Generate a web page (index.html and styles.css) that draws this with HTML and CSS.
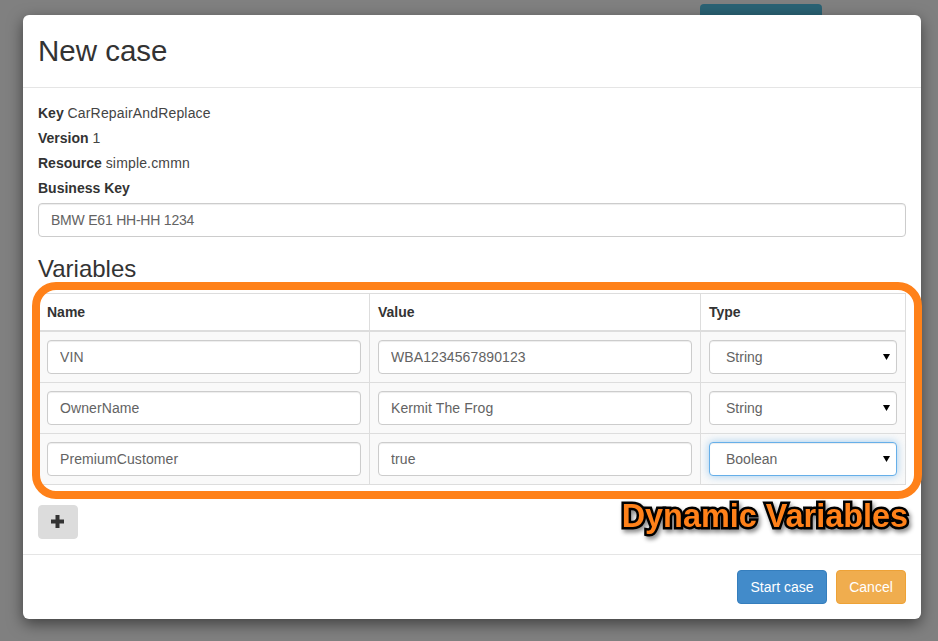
FILE: index.html
```html
<!DOCTYPE html>
<html lang="en">
<head>
<meta charset="utf-8">
<title>New case</title>
<link rel="stylesheet" href="styles.css">
</head>
<body>
<div class="behind">
  <span class="behind-title">ACM Dashboard</span>
  <span class="behind-btn"></span>
</div>
<div class="modal">
  <header class="modal-header"><h4>New case</h4></header>
  <div class="modal-body">
    <p class="info"><b>Key</b> <span class="wide">CarRepairAndReplace</span></p>
    <p class="info"><b>Version</b> <span class="wide">1</span></p>
    <p class="info"><b>Resource</b> <span class="wide">simple.cmmn</span></p>
    <label class="info"><b>Business Key</b></label>
    <input class="field tight" value="BMW E61 HH-HH 1234">
    <h3>Variables</h3>
    <table class="vars">
      <colgroup><col class="c1"><col class="c2"><col class="c3"></colgroup>
      <thead><tr><th>Name</th><th>Value</th><th>Type</th></tr></thead>
      <tbody>
        <tr>
          <td><input class="field" value="VIN"></td>
          <td><input class="field" value="WBA1234567890123"></td>
          <td><div class="select"><span>String</span><svg width="7" height="6" viewBox="0 0 7 6"><path d="M0 0h7L3.5 6z"/></svg></div></td>
        </tr>
        <tr>
          <td><input class="field" value="OwnerName"></td>
          <td><input class="field" value="Kermit The Frog"></td>
          <td><div class="select"><span>String</span><svg width="7" height="6" viewBox="0 0 7 6"><path d="M0 0h7L3.5 6z"/></svg></div></td>
        </tr>
        <tr>
          <td><input class="field" value="PremiumCustomer"></td>
          <td><input class="field" value="true"></td>
          <td><div class="select focus"><span>Boolean</span><svg width="7" height="6" viewBox="0 0 7 6"><path d="M0 0h7L3.5 6z"/></svg></div></td>
        </tr>
      </tbody>
    </table>
    <button class="add" type="button" aria-label="Add"><svg width="13" height="13" viewBox="0 0 13 13"><path d="M4.5 0h4v4.5H13v4H8.5V13h-4V8.5H0v-4h4.5z"/></svg></button>
  </div>
  <footer class="modal-footer">
    <button class="btn start" type="button">Start case</button>
    <button class="btn cancel" type="button">Cancel</button>
  </footer>
  <div class="frame"></div>
  <div class="callout">Dynamic Variables</div>
</div>
</body>
</html>
```
FILE: styles.css
```css
* { box-sizing: border-box; }
html, body { margin: 0; height: 100%; }
body {
  background: #808080;
  font-family: "Liberation Sans", Arial, sans-serif;
  font-size: 14px;
  line-height: 20px;
  color: #333;
  overflow: hidden;
}
.behind {
  display: flex;
  justify-content: space-between;
  padding: 4px 116px 0 127px;
}
.behind-title { font-size: 18px; margin-top: 8px; color: #1a1a1a; font-weight: 700; }
.behind-btn {
  width: 122px;
  height: 34px;
  background: #2a6274;
  border-radius: 4px;
}
.modal {
  position: absolute;
  left: 23px;
  top: 15px;
  width: 898px;
  height: 604px;
  background: #fff;
  border-radius: 6px;
  box-shadow: 0 5px 15px rgba(0, 0, 0, .5);
}
.modal-header {
  padding: 15px;
  border-bottom: 1px solid #e5e5e5;
}
.modal-header h4 {
  margin: 0;
  font-size: 29.5px;
  font-weight: 400;
  line-height: 42px;
}
.modal-body { padding: 15px; }
.info { display: block; margin: 0 0 5px; }
.wide { letter-spacing: .16px; color: #444; }
.field {
  display: block;
  width: 100%;
  height: 34px;
  padding: 6px 12px;
  font: inherit;
  letter-spacing: .1px;
  color: #636363;
  background: #fff;
  border: 1px solid #ccc;
  border-radius: 4px;
  box-shadow: inset 0 1px 1px rgba(0, 0, 0, .075);
  outline: none;
}
.field.tight { letter-spacing: -.22px; }
.modal-body h3 {
  margin: 19px 0 11px;
  font-size: 24px;
  font-weight: 400;
  line-height: 26px;
}
.vars {
  width: 867px;
  table-layout: fixed;
  border-collapse: collapse;
  margin-bottom: 20px;
}
.c1, .c2 { width: 331px; }
.c3 { width: 205px; }
.vars th, .vars td {
  border: 1px solid #ddd;
  padding: 8px;
  text-align: left;
  vertical-align: top;
}
.vars th { border-bottom-width: 2px; }
.vars tbody td { background: #f9f9f9; }
.select {
  position: relative;
  display: flex;
  align-items: center;
  height: 34px;
  padding-left: 16px;
  color: #636363;
  background: #fff;
  border: 1px solid #ccc;
  border-radius: 4px;
  box-shadow: inset 0 1px 1px rgba(0, 0, 0, .075);
}
.select svg { position: absolute; right: 6px; top: 13px; fill: #000; }
.select.focus {
  border-color: #66afe9;
  box-shadow: inset 0 1px 1px rgba(0, 0, 0, .075), 0 0 8px rgba(102, 175, 233, .6);
}
.add {
  display: flex;
  align-items: center;
  justify-content: center;
  width: 40px;
  height: 34px;
  padding: 0 1px 1px 0;
  background: #dcdcdc;
  border: 1px solid #dcdcdc;
  border-radius: 4px;
}
.add svg { fill: #333; }
.modal-footer {
  display: flex;
  justify-content: flex-end;
  gap: 9px;
  padding: 15px;
  border-top: 1px solid #e5e5e5;
}
.btn {
  height: 34px;
  padding: 6px 12px;
  font: inherit;
  color: #fff;
  border: 1px solid;
  border-radius: 4px;
}
.start { width: 90px; background: #428bca; border-color: #357ebd; }
.cancel { width: 70px; background: #f0ad4e; border-color: #eea236; }
.frame {
  position: absolute;
  left: 9px;
  top: 267px;
  width: 890px;
  height: 217px;
  border: 8px solid #ff8119;
  border-radius: 24px;
  pointer-events: none;
}
.callout {
  position: absolute;
  right: 13px;
  top: 483px;
  font-size: 32.4px;
  line-height: 36px;
  font-weight: 700;
  color: #ff8119;
  white-space: nowrap;
  -webkit-text-stroke: 5px #000;
  paint-order: stroke fill;
  filter: drop-shadow(2px 3px 2px rgba(0, 0, 0, .45));
}
```
